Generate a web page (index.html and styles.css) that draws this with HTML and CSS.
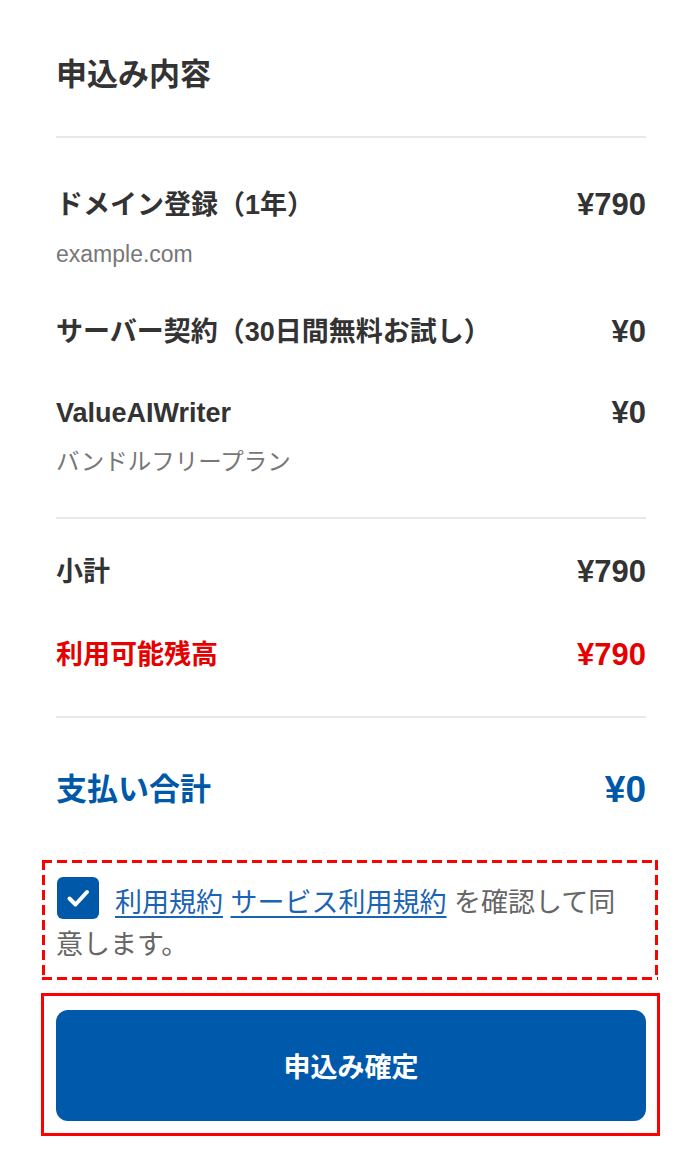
FILE: index.html
```html
<!DOCTYPE html>
<html lang="ja">

<head>
    <meta charset="UTF-8">
    <title>申込み内容</title>
    <link rel="stylesheet" href="styles.css">
</head>

<body>
    <div class="page">
        <h2 class="title">申込み内容</h2>

        <div class="items">
            <div class="item">
                <div class="row">
                    <span class="label">ドメイン登録（1年）</span>
                    <span class="price">¥790</span>
                </div>
                <div class="sub">example.com</div>
            </div>
            <div class="item">
                <div class="row">
                    <span class="label">サーバー契約（30日間無料お試し）</span>
                    <span class="price">¥0</span>
                </div>
            </div>
            <div class="item">
                <div class="row">
                    <span class="label">ValueAIWriter</span>
                    <span class="price">¥0</span>
                </div>
                <div class="sub sub-jp">バンドルフリープラン</div>
            </div>
        </div>

        <div class="summary">
            <div class="row">
                <span class="label">小計</span>
                <span class="price">¥790</span>
            </div>
            <div class="row balance">
                <span class="label">利用可能残高</span>
                <span class="price">¥790</span>
            </div>
        </div>

        <div class="row total">
            <span class="label">支払い合計</span>
            <span class="price">¥0</span>
        </div>

        <div class="agree-box">
            <label class="agree">
                <span class="check">
                    <svg width="42" height="42" viewBox="0 0 42 42">
                        <path d="M12.5 21.5 L18.5 27.5 L30 15" fill="none" stroke="#fff" stroke-width="4"
                            stroke-linecap="round" stroke-linejoin="round" />
                    </svg>
                </span><a href="#">利用規約</a> <a href="#">サービス利用規約</a> を確認して同意します。
            </label>
        </div>

        <div class="submit-box">
            <button type="button" class="submit">申込み確定</button>
        </div>
    </div>
</body>

</html>
```

FILE: styles.css
```css
body {
    font-family: "Liberation Sans", "Noto Sans CJK JP", sans-serif;
    margin: 0;
    background-color: #fff;
    color: #333;
}

.page {
    width: 590px;
    margin-left: 56px;
}

.title {
    margin: 0;
    padding: 55px 0 41px;
    font-size: 31px;
    line-height: 40px;
    font-weight: 700;
    color: #333;
    border-bottom: 2px solid #e8e8e8;
}

.row {
    display: flex;
    justify-content: space-between;
    align-items: center;
}

.label {
    font-size: 27px;
    line-height: 36px;
    font-weight: 700;
}

.price {
    font-size: 31px;
    line-height: 36px;
    font-weight: 700;
}

.items {
    display: flex;
    flex-direction: column;
    gap: 45px;
    padding: 49px 0 40px;
    border-bottom: 2px solid #e8e8e8;
}

.sub {
    margin-top: 16px;
    font-size: 23px;
    line-height: 30px;
    color: #777;
}

.sub-jp {
    font-size: 23.5px;
}

.summary {
    display: flex;
    flex-direction: column;
    gap: 47px;
    padding: 35px 0 43px;
    border-bottom: 2px solid #e8e8e8;
}

.balance {
    color: #e60000;
}

.total {
    padding-top: 50px;
    margin-bottom: 48px;
    color: #0058a9;
}

.total .label {
    font-size: 31px;
    line-height: 44px;
}

.total .price {
    font-size: 37px;
    line-height: 44px;
}

/* 破線は 10px + 5px の間隔で描く */
.agree-box {
    margin: 0 -12px 0 -14px;
    padding: 22px 20px 14px 14px;
    background:
        linear-gradient(90deg, #f00 10px, transparent 10px) top left / 15px 3px repeat-x,
        linear-gradient(90deg, #f00 10px, transparent 10px) bottom left / 15px 3px repeat-x,
        linear-gradient(180deg, #f00 10px, transparent 10px) top left / 3px 15px repeat-y,
        linear-gradient(180deg, #f00 10px, transparent 10px) top right / 3px 15px repeat-y;
}

.agree {
    display: block;
    font-size: 27px;
    line-height: 42px;
    color: #666;
}

.check {
    display: inline-block;
    width: 42px;
    height: 42px;
    margin: -5px 16px 0 1px;
    vertical-align: top;
    border-radius: 6px;
    background-color: #0058a9;
}

.check svg {
    display: block;
}

.agree a {
    color: #1b63b3;
    text-decoration: underline;
    text-underline-offset: 4px;
}

.submit-box {
    margin: 13px -14px 0 -15px;
    padding: 14px 11px 12px 12px;
    border: 3px solid #f00;
}

.submit {
    display: block;
    width: 100%;
    height: 111px;
    border: none;
    border-radius: 12px;
    background-color: #0059aa;
    color: #fff;
    font-family: inherit;
    font-size: 27px;
    font-weight: 700;
    cursor: pointer;
}
```
